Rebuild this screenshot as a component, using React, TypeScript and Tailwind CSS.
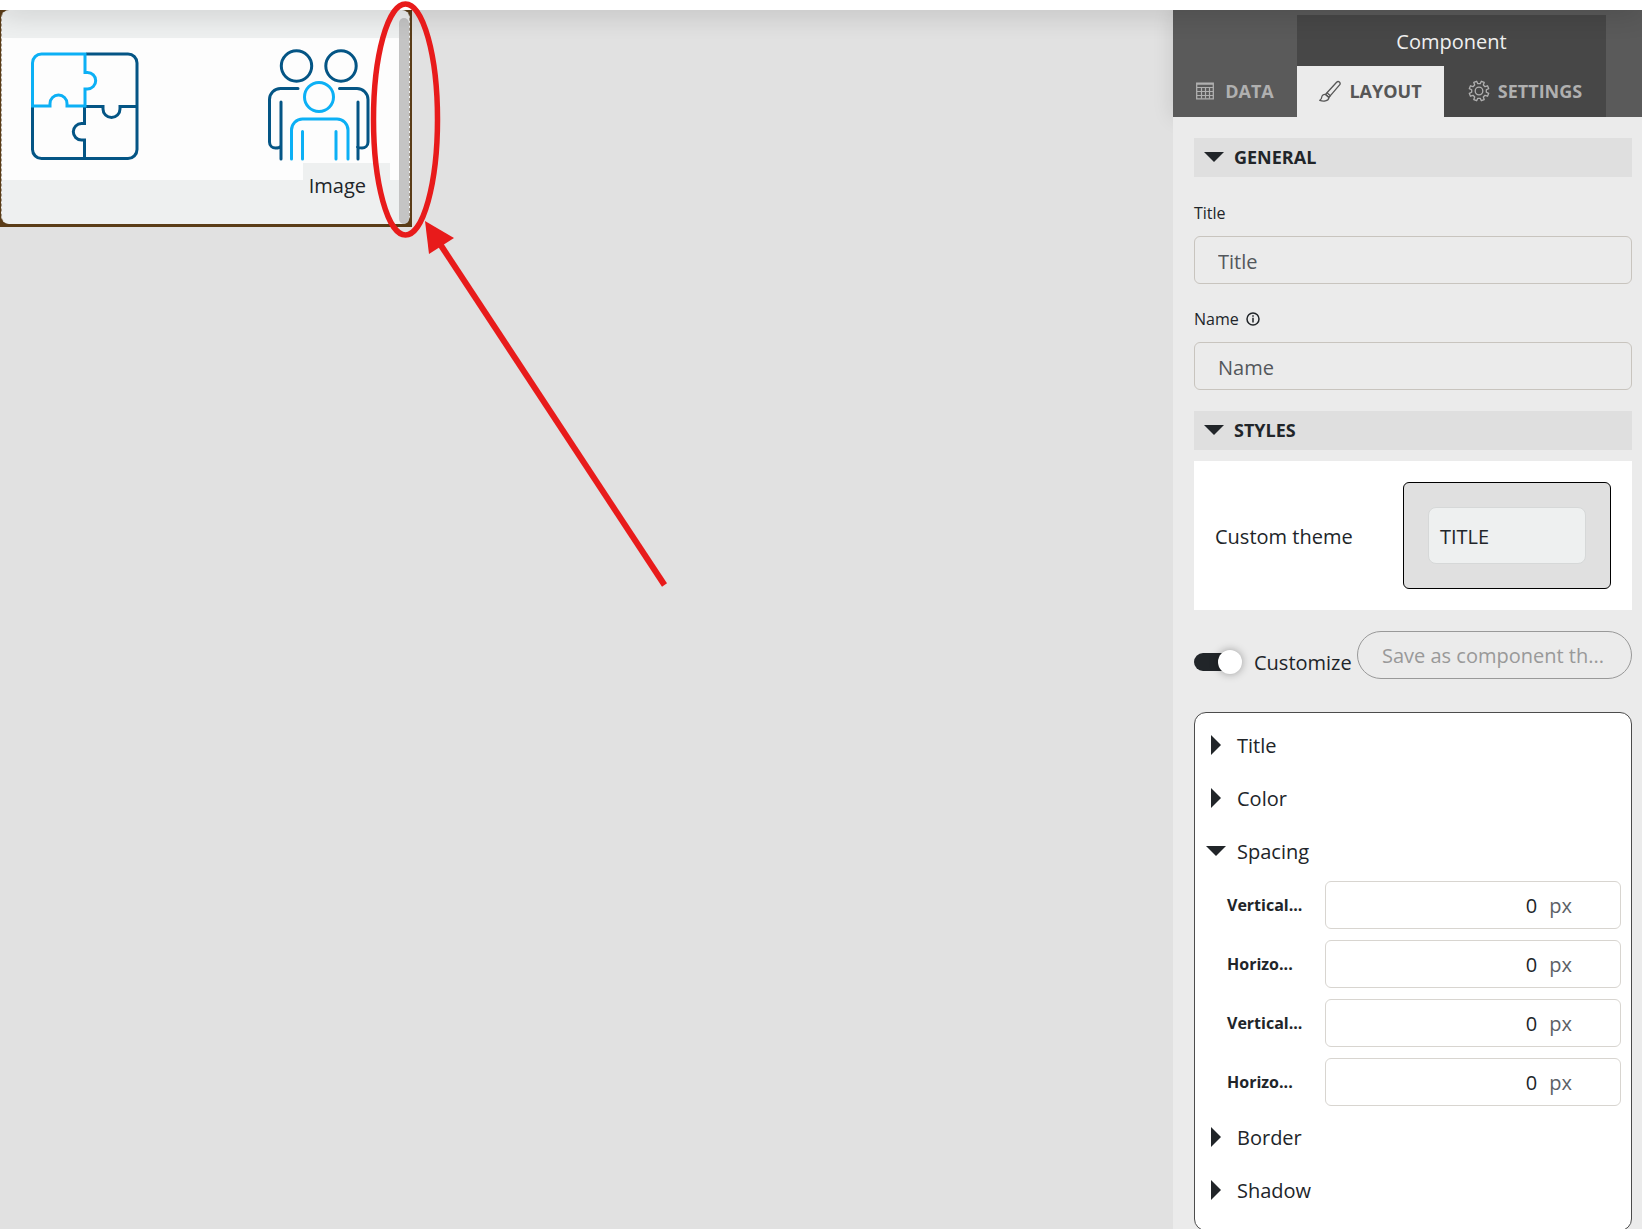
import { useState } from 'react';

const TableIcon = () => (
  <svg viewBox="0 0 18 18" className="h-[18px] w-[18px]" fill="none" stroke="currentColor">
    <path d="M.7 1.200h16.600v15.600H.7zM.7 2.200h16.600" strokeWidth="1.300" />
    <path d="M.7 5.500h16.600M.7 9.500h16.600M.7 13.500h16.600M5.500 5.500v11M9.500 5.500v11M13.500 5.500v11" strokeWidth="1.200" />
  </svg>
);

const BrushIcon = () => (
  <svg viewBox="0 0 22 22" className="h-[22px] w-[22px]" fill="none" stroke="currentColor" strokeWidth="1.300" strokeLinejoin="round">
    <path d="M8 12.800 17.600 2.200c1.900-1.800 4.600.5 3 2.700L11.400 15.700z" />
    <path d="M8 12.800 6.600 14.400l3.400 3 1.400-1.700" />
    <path d="M6.600 14.400c-2.200-.3-3.700.8-3.900 2.800C2.600 18.600 2 19.600.8 20.300c3 1.200 8.800 1.300 9.200-2.900z" />
  </svg>
);

const gearPoints = Array.from({ length: 8 }, (_, i) => 22.5 + i * 45)
  .flatMap((angle) => [
    [angle - 13, 7.4],
    [angle - 9, 10],
    [angle + 9, 10],
    [angle + 13, 7.4],
  ])
  .map(([angle, r]) => {
    const rad = (angle * Math.PI) / 180;
    return `${(11 + r * Math.cos(rad)).toFixed(2)},${(11 + r * Math.sin(rad)).toFixed(2)}`;
  })
  .join(' ');

const GearIcon = () => (
  <svg viewBox="0 0 22 22" className="h-[22px] w-[22px]" fill="none" stroke="currentColor" strokeWidth="1.300" strokeLinejoin="round">
    <polygon points={gearPoints} />
    <circle cx="11" cy="11" r="3.800" />
  </svg>
);

const PuzzleIcon = () => (
  <svg viewBox="0 0 108 108" className="h-[108px] w-[108px]" fill="none" strokeWidth="3">
    <g stroke="#045585">
      <path d="M55 2H97a9 9 0 0 1 9 9V97.500a9 9 0 0 1-9 9H10.500a9 9 0 0 1-9-9V53.500" />
      <path d="M53.500 107V88h-3a8.200 8.200 0 0 1 0-16.400h3V54.500H72v2.500a8.500 8.500 0 0 0 17 0v-2.500h17" />
    </g>
    <path d="M1.500 54V11a9 9 0 0 1 9-9H54V20.500h2.500a8.200 8.200 0 0 1 0 16.400H54V54H36v-2.500a8.500 8.500 0 0 0-17 0V54z" stroke="#0cb0f5" />
  </svg>
);

const PeopleIcon = () => (
  <svg viewBox="0 0 104 112" className="h-28 w-[104px]" fill="none" strokeWidth="3" strokeLinecap="round">
    <g stroke="#045585">
      <circle cx="29.500" cy="17" r="15.200" />
      <circle cx="74" cy="17" r="15.200" />
      <path d="M31 39.500H13.500a11 11 0 0 0-11 11V93c0 4 3 6 6 6 3 0 5-1 5.500-2M14 53v57" />
      <path d="M72.500 39.500H90a11 11 0 0 1 11 11V93c0 4-3 6-6 6-2 0-3.500-.5-4.500-1M91 53v57" />
    </g>
    <g stroke="#0cb0f5">
      <circle cx="52" cy="48" r="14.500" />
      <path d="M24.500 110V81a11 11 0 0 1 11-11H70a11 11 0 0 1 11 11v29M35.500 82.500V110M69 82.500V110" />
    </g>
  </svg>
);

const Caret = ({ open }: { open: boolean }) => (
  <span className="flex h-5 w-5 shrink-0 items-center justify-center text-[#212529]">
    {open ? (
      <svg viewBox="0 0 20 10" className="h-[10px] w-5" fill="currentColor">
        <path d="M0 0h20L10 10z" />
      </svg>
    ) : (
      <svg viewBox="0 0 10 20" className="h-5 w-[10px]" fill="currentColor">
        <path d="M0 0v20l10-10z" />
      </svg>
    )}
  </span>
);

const SectionHeader = ({ label }: { label: string }) => (
  <button type="button" className="flex h-[39px] w-full items-center gap-[10px] bg-[#dfdfdf] px-[10px] pb-[2px] text-lg font-bold text-[#212529]">
    <Caret open />
    {label}
  </button>
);

interface StyleRowProps {
  label: string;
  open: boolean;
  onToggle: () => void;
}

const StyleRow = ({ label, open, onToggle }: StyleRowProps) => (
  <button type="button" onClick={onToggle} className="flex h-[53px] w-full items-center gap-[11px] px-[11px] pb-[2px] text-left">
    <span className="pb-[2px]">
      <Caret open={open} />
    </span>
    {label}
  </button>
);

const spacingFields = [
  { id: 'vertical-padding', label: 'Vertical...' },
  { id: 'horizontal-padding', label: 'Horizo...' },
  { id: 'vertical-margin', label: 'Vertical...' },
  { id: 'horizontal-margin', label: 'Horizo...' },
];

const SpacingFields = () => (
  <div className="flex flex-col gap-[11px] pb-[6px] pl-8 pr-[10px] pt-[2px]">
    {spacingFields.map(({ id, label }) => (
      <div key={id} className="flex items-center">
        <label htmlFor={id} className="w-[98px] shrink-0 text-base font-bold">
          {label}
        </label>
        <div className="flex h-12 min-w-0 flex-1 items-center gap-3 rounded-md border border-[#d8d5d0] pr-12 pt-[2px]">
          <input id={id} defaultValue="0" className="min-w-0 flex-1 bg-transparent text-right outline-none" />
          <span className="text-[#5c6166]">px</span>
        </div>
      </div>
    ))}
  </div>
);

const Widget = () => (
  <div className="w-[412px] bg-[#5a3c17] pb-[3px] pl-px pr-[2px]">
    <div className="flex h-[214px] justify-between rounded-lg border-x border-dashed border-[#a59a8c] bg-[#eef0f0] pt-7">
      <div className="flex h-[142px] flex-1 items-start justify-between bg-[#fdfdfd] pl-[29px] pt-[11px]">
        <div className="pt-[3px]">
          <PuzzleIcon />
        </div>
        <div className="relative mr-7">
          <PeopleIcon />
          <span className="absolute -right-[19px] top-[114px] bg-[#eef0f0] pl-[6px] pr-6 text-xl leading-[46px] text-[#212529]">
            Image
          </span>
        </div>
      </div>
      <div className="-mt-5 w-[10px] rounded-full bg-[#c4c4c4]" />
    </div>
  </div>
);

const Annotation = () => (
  <svg viewBox="0 0 680 600" className="pointer-events-none absolute left-0 top-0 z-30 h-[600px] w-[680px]">
    <ellipse cx="405.500" cy="119.500" rx="32" ry="115.500" fill="none" stroke="#e81b1b" strokeWidth="5.500" />
    <path d="M664.500 585 440 244" stroke="#e81b1b" strokeWidth="6" />
    <path d="M425 221 454 238 429 254z" fill="#e81b1b" />
  </svg>
);

const Sidebar = () => {
  const [open, setOpen] = useState('Spacing');
  const [customize, setCustomize] = useState(true);
  const toggle = (label: string) => setOpen(open === label ? '' : label);

  return (
    <aside className="flex w-[469px] shrink-0 flex-col">
      <header className="flex h-[107px] shrink-0 items-stretch bg-[#5a5a5a] pt-[5px] text-lg font-bold shadow-[0_0_20px_rgba(0,0,0,0.12)]">
        <button type="button" className="mt-[51px] flex w-[124px] items-center justify-center gap-[11px] pb-[2px] text-[#b0b0b0]">
          <TableIcon />
          DATA
        </button>
        <div className="flex w-[309px] flex-col bg-[#474747]">
          <h1 className="flex h-[51px] items-center justify-center pt-[2px] text-xl font-normal text-[#f0f0f0]">Component</h1>
          <div className="flex flex-1">
            <button type="button" className="flex w-[147px] items-center justify-center gap-2 bg-[#ebebeb] pb-[2px] text-[#565656]">
              <BrushIcon />
              LAYOUT
            </button>
            <button type="button" className="flex flex-1 items-center justify-center gap-2 pb-[2px] text-[#b0b0b0]">
              <GearIcon />
              SETTINGS
            </button>
          </div>
        </div>
      </header>

      <div className="relative flex-1 bg-[#ebebeb] pl-[21px] pr-[10px] pt-[21px]">
        <SectionHeader label="GENERAL" />
        <label htmlFor="title" className="mt-6 block text-base">
          Title
        </label>
        <input
          id="title"
          placeholder="Title"
          className="mt-[11px] h-12 w-full rounded-md border border-[#c8c4be] px-[23px] pt-[2px] placeholder:text-[#53575b]"
        />
        <label htmlFor="name" className="mt-[23px] flex items-center gap-[7px] text-base">
          Name
          <svg viewBox="0 0 14 14" className="h-[14px] w-[14px]" fill="none" stroke="currentColor">
            <circle cx="7" cy="7" r="6" strokeWidth="1.500" />
            <path d="M7 3.200v1.500M7 5.800v4.800" strokeWidth="1.500" />
          </svg>
        </label>
        <input
          id="name"
          placeholder="Name"
          className="mb-[21px] mt-[11px] h-12 w-full rounded-md border border-[#c8c4be] px-[23px] pt-[2px] placeholder:text-[#53575b]"
        />

        <SectionHeader label="STYLES" />
        <div className="mt-[11px] flex items-center justify-between bg-white p-[21px]">
          <span className="pt-[2px]">Custom theme</span>
          <button type="button" className="h-[107px] w-52 rounded-md border border-black bg-[#e0e0e0] p-6 text-left">
            <span className="flex h-full items-center rounded-lg border border-[#d6d8d8] bg-[#eef0f0] px-[11px] pt-[2px]">TITLE</span>
          </button>
        </div>

        <div className="mt-[21px] flex items-start justify-between">
          <label className="flex items-center gap-3 pt-4">
            <input
              type="checkbox"
              role="switch"
              checked={customize}
              onChange={() => setCustomize(!customize)}
              className="flex h-[18px] w-12 appearance-none items-center rounded-full bg-[linear-gradient(#212529,#212529)] bg-[length:36px_18px] bg-no-repeat before:h-6 before:w-6 before:rounded-full before:bg-white before:shadow-[0_0_8px_rgba(0,0,0,0.35)] checked:before:ml-6"
            />
            <span className="pt-[2px]">Customize</span>
          </label>
          <button type="button" className="h-12 w-[275px] rounded-full border border-[#999] px-6 pt-[2px] text-left text-[#999]">
            Save as component th...
          </button>
        </div>

        <div className="mt-[33px] rounded-xl border border-[#4c4c4c] bg-white pb-3 pt-[7px]">
          {['Title', 'Color', 'Spacing', 'Border', 'Shadow'].map((label) => (
            <div key={label}>
              <StyleRow label={label} open={open === label} onToggle={() => toggle(label)} />
              {label === 'Spacing' && open === label && <SpacingFields />}
            </div>
          ))}
        </div>
      </div>
    </aside>
  );
};

const App = () => {
  return (
    <div className="relative flex h-screen flex-col overflow-hidden bg-[#e1e1e1] font-['Open_Sans','Noto_Sans',sans-serif] text-xl text-[#212529]">
      <div className="relative z-20 h-[10px] shrink-0 bg-white shadow-[0_0_28px_rgba(0,0,0,0.3)]" />
      <div className="flex min-h-0 flex-1">
        <main className="min-w-0 flex-1">
          <Widget />
        </main>
        <Sidebar />
      </div>
      <Annotation />
    </div>
  );
};

export default App;
